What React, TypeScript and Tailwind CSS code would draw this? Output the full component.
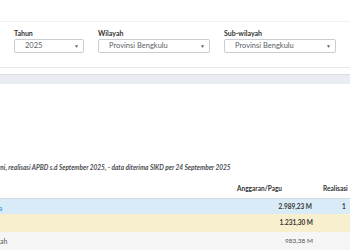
import React from "react"

const font = { fontFamily: '"Lato", "Noto Sans", sans-serif' }

function Select({ value, className }: { value: string; className: string }) {
  return (
    <div
      className={`h-[14px] flex items-center justify-between border border-[#c9ccd1] rounded-[2px] bg-white pr-[4px] ${className}`}
    >
      <span className="text-[7.5px] text-[#5a5f66] leading-none">{value}</span>
      <span className="text-[5px] text-[#666] leading-none">▼</span>
    </div>
  )
}

export default function App() {
  return (
    <div className="w-[350px] h-[250px] bg-white overflow-hidden relative" style={font}>
      <div className="h-[21px]" />

      {/* Filter card */}
      <div className="h-[46px] border-t border-[#eef0f2] flex">
        <div className="ml-[14px] mt-[6px] flex flex-col">
          <span className="text-[7px] font-bold text-[#333] leading-[10px]">Tahun</span>
          <Select value="2025" className="w-[70px] mt-[1px] pl-[10px]" />
        </div>
        <div className="ml-[14px] mt-[6px] flex flex-col">
          <span className="text-[7px] font-bold text-[#333] leading-[10px]">Wilayah</span>
          <Select value="Provinsi Bengkulu" className="w-[112px] mt-[1px] pl-[10px]" />
        </div>
        <div className="ml-[14px] mt-[6px] flex flex-col">
          <span className="text-[7px] font-bold text-[#333] leading-[10px]">Sub-wilayah</span>
          <Select value="Provinsi Bengkulu" className="w-[112px] mt-[1px] pl-[10px]" />
        </div>
      </div>

      <div className="border-t border-[#e6e8eb] h-[7px]" />
      <div className="h-[10px] bg-[#e9edf2] border-t border-[#d8dde3]" />

      <div className="h-[79px]" />

      <div className="h-[10px] flex items-center -ml-[2px]">
        <span className="text-[6.5px] italic font-bold text-[#4a4f55] whitespace-nowrap leading-none">
          rni, realisasi APBD s.d September 2025, - data diterima SIKD per 24 September 2025
        </span>
      </div>

      <div className="h-[7px]" />

      {/* Table */}
      <div className="h-[18px] flex items-center text-[6.5px] font-bold text-[#333]">
        <span className="ml-[237px]">Anggaran/Pagu</span>
        <span className="ml-[41px] whitespace-nowrap">Realisasi</span>
      </div>
      <div className="h-[16px] bg-[#d9ebf7] flex items-center text-[6.5px] font-bold text-[#333] border-t border-[#d0dbe4]">
        <span className="w-[3px] h-[6px] -ml-[1px] text-[#4aa3df]">a</span>
        <span className="w-[310px] text-right">2.989,23 M</span>
        <span className="ml-[30px]">1</span>
      </div>
      <div className="h-[18px] bg-[#f8efcf] flex items-center text-[6.5px] font-bold text-[#333]">
        <span className="w-[313px] text-right">1.231,30 M</span>
      </div>
      <div className="h-[18px] bg-[#f5f5f5] flex items-center text-[6.5px] text-[#555]">
        <span className="w-[10px] text-[7px]">ah</span>
        <span className="w-[303px] text-right">983,38 M</span>
      </div>
    </div>
  )
}
